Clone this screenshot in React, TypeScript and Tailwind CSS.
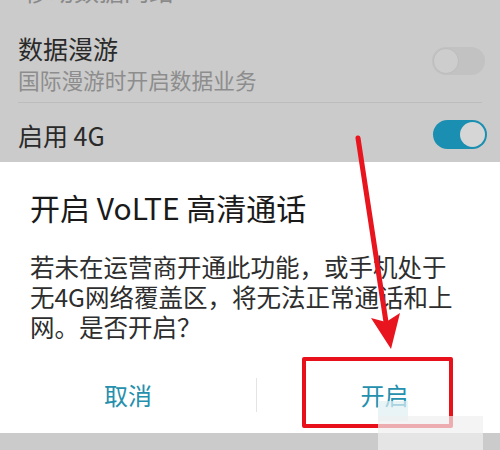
import React from "react";

const font = { fontFamily: '"Noto Sans CJK SC", "Noto Sans", sans-serif' };

const Toggle: React.FC<{ on: boolean }> = ({ on }) => {
  return on ? (
    <div className="w-[54px] h-[29px] rounded-full bg-[#1a8fb1] flex items-center justify-end pr-[2px]">
      <div className="w-[25px] h-[25px] rounded-full bg-[#d6d6d6]" />
    </div>
  ) : (
    <div className="w-[53px] h-[28px] rounded-full bg-[#c2c2c2] flex items-center pl-[1px]">
      <div className="w-[26px] h-[26px] rounded-full bg-[#cdcdcd] border border-[#bdbdbd]" />
    </div>
  );
};

export default function App() {
  return (
    <div className="relative w-[500px] h-[450px] overflow-hidden bg-[#cbcbcb]" style={font}>
      {/* settings list behind the dialog (dimmed) */}
      <div className="h-[162px] flex flex-col">
        <div className="h-[7px] overflow-hidden px-[24px]">
          <div className="-mt-[24px] text-[25px] leading-[28px] text-[#8a8a8a]">移动数据网络</div>
        </div>
        <div className="flex items-start justify-between pl-[18px] pr-[15px] pt-[27px]">
          <div>
            <div className="text-[25px] leading-[28px] text-[#2a2a2a]">数据漫游</div>
            <div className="text-[21.7px] leading-[24px] mt-[6px] text-[#8d8d8d]">国际漫游时开启数据业务</div>
          </div>
          <div className="mt-[13px]">
            <Toggle on={false} />
          </div>
        </div>
        <div className="mt-[10px] mx-[18px] h-px bg-[#bdbdbd]" />
        <div className="flex items-center justify-between pl-[18px] pr-[13px] pt-[17px]">
          <div className="text-[25px] leading-[28px] text-[#2a2a2a]">启用 4G</div>
          <Toggle on={true} />
        </div>
      </div>

      {/* dialog */}
      <div className="bg-white h-[271px] flex flex-col">
        <div className="px-[30px] pt-[26px] text-[30px] leading-[38px] text-[#1a1a1a]">开启 VoLTE 高清通话</div>
        <div className="px-[30px] mt-[26px] text-[24.5px] leading-[30px] text-[#2e2e2e]">
          <div>若未在运营商开通此功能，或手机处于</div>
          <div>无4G网络覆盖区，将无法正常通话和上</div>
          <div>网。是否开启？</div>
        </div>
        <div className="mt-[33px] flex items-center h-[40px]">
          <div className="w-[256px] text-center text-[24px] text-[#2590ad]">取消</div>
          <div className="w-px h-[34px] bg-[#e4e4e4]" />
          <div className="flex-1 pl-[12px] text-center text-[24px] text-[#2590ad]">开启</div>
        </div>
      </div>

      {/* annotation: red box */}
      <div className="absolute left-[302px] top-[357px] w-[151px] h-[71px] border-[4px] border-[#e8101a] rounded-[2px]" />

      {/* watermark patches */}
      <div className="absolute left-[378px] top-[401px] w-[30px] h-[20px] bg-[#dfeff4]/70" />
      <div className="absolute left-[378px] top-[416px] w-[105px] h-[34px] bg-[#f0f0f0]/70" />

      {/* annotation: red arrow */}
      <svg className="absolute left-0 top-0" width="500" height="450" viewBox="0 0 500 450">
        <line x1="358" y1="138" x2="386" y2="322" stroke="#e8141e" strokeWidth="5" strokeLinecap="round" />
        <polygon points="391,349 371,318 386,322 400,313" fill="#e8141e" />
      </svg>
    </div>
  );
}
